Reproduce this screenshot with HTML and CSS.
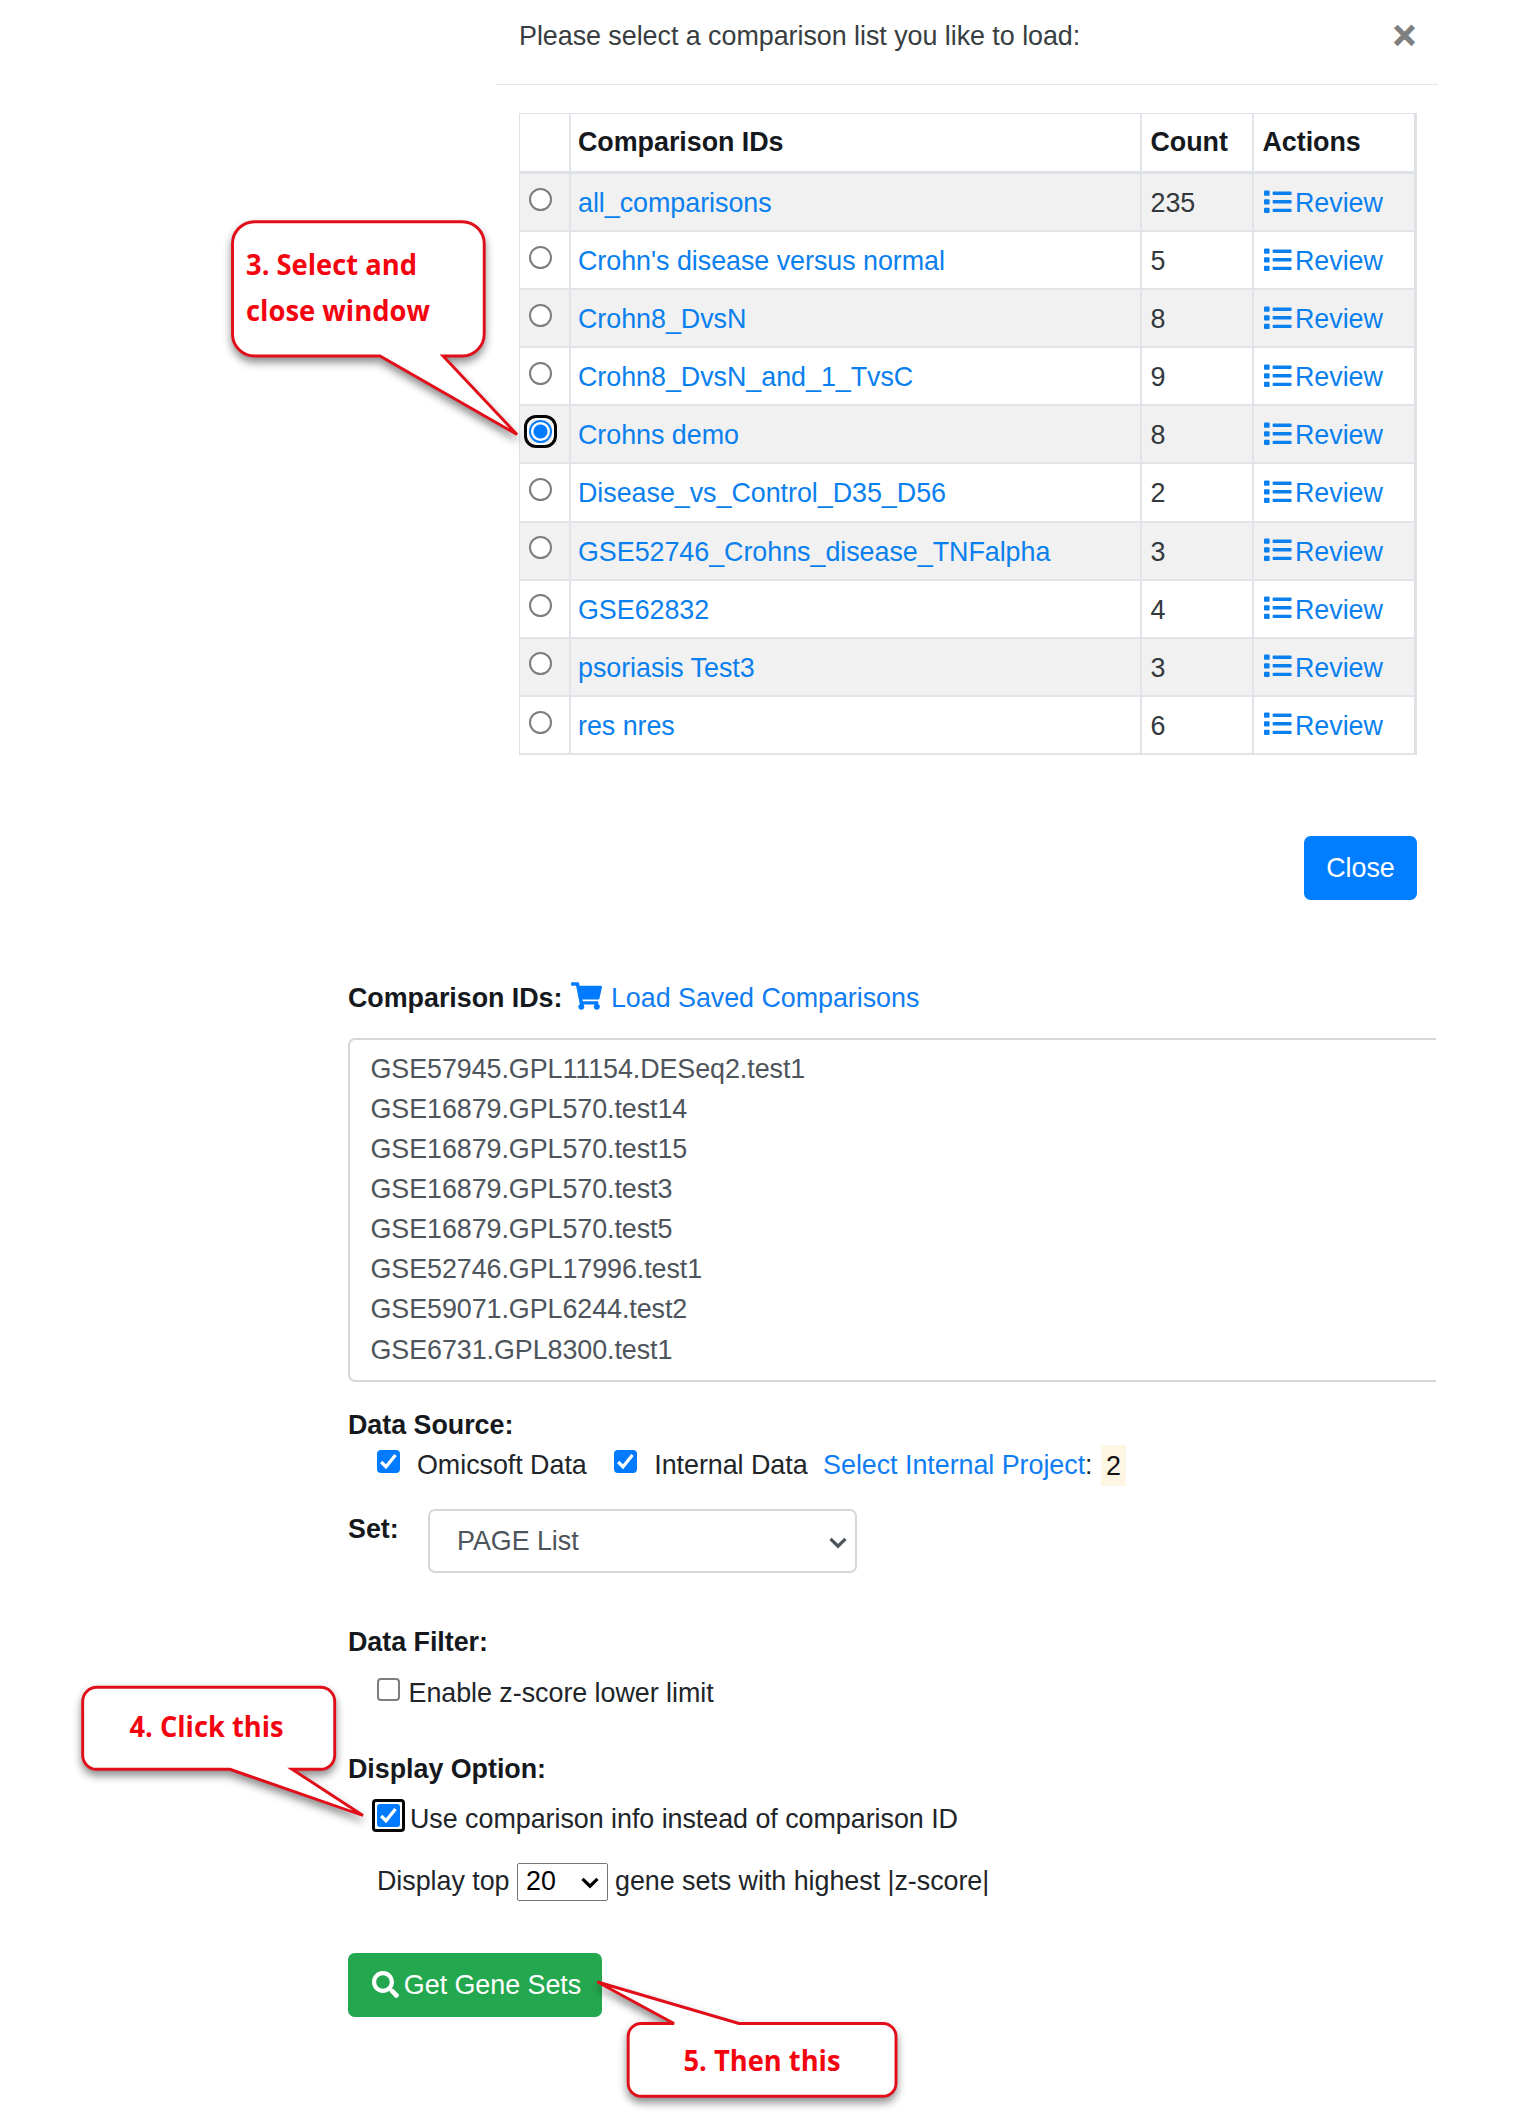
FILE: index.html
```html
<!DOCTYPE html>
<html lang="en">
<head>
<meta charset="utf-8">
<title>Load Saved Comparisons</title>
<link rel="stylesheet" href="styles.css">
</head>
<body>
<svg class="symbols" width="0" height="0" aria-hidden="true">
  <symbol id="list" viewBox="0 0 28 24">
    <rect x="0" y="0.6" width="5.6" height="5.2" rx="1"/><rect x="0" y="9.2" width="5.6" height="5.2" rx="1"/><rect x="0" y="17.8" width="5.6" height="5.2" rx="1"/>
    <rect x="8.6" y="1.5" width="19" height="3.4" rx="1"/><rect x="8.6" y="10.1" width="19" height="3.4" rx="1"/><rect x="8.6" y="18.7" width="19" height="3.4" rx="1"/>
  </symbol>
  <symbol id="cart" viewBox="0 0 576 512">
    <path d="M528.12 301.319l47.273-208C578.806 78.301 567.391 64 551.99 64H159.208l-9.166-44.81C147.758 8.021 137.93 0 126.529 0H24C10.745 0 0 10.745 0 24v16c0 13.255 10.745 24 24 24h69.883l70.248 343.435C147.325 417.1 136 435.222 136 456c0 30.928 25.072 56 56 56s56-25.072 56-56c0-15.674-6.447-29.835-16.824-40h209.647C430.447 426.165 424 440.326 424 456c0 30.928 25.072 56 56 56s56-25.072 56-56c0-22.172-12.888-41.332-31.579-50.405l5.517-24.276c3.413-15.018-8.002-29.319-23.403-29.319H218.117l-6.545-32h293.145c11.206 0 20.92-7.754 23.403-18.681z"/>
  </symbol>
  <symbol id="search" viewBox="0 0 512 512">
    <path d="M505 442.7L405.3 343c-4.500-4.500-10.600-7-17-7H372c27.600-35.300 44-79.700 44-128C416 93.100 322.900 0 208 0S0 93.100 0 208s93.100 208 208 208c48.300 0 92.700-16.400 128-44v16.300c0 6.400 2.500 12.500 7 17l99.700 99.700c9.400 9.400 24.600 9.400 33.900 0l28.300-28.300c9.400-9.400 9.400-24.600.1-34zM208 336c-70.700 0-128-57.200-128-128 0-70.700 57.200-128 128-128 70.700 0 128 57.200 128 128 0 70.700-57.200 128-128 128z"/>
  </symbol>
  <symbol id="check" viewBox="0 0 23 23">
    <path d="M4.200 12 L9 16.700 L18.500 5" fill="none" stroke="#fff" stroke-width="3.300"/>
  </symbol>
  <symbol id="chevron" viewBox="0 0 18 12">
    <path d="M1.500 1.800 L9 9.200 L16.500 1.800" fill="none" stroke="currentColor" stroke-width="3.200"/>
  </symbol>
</svg>

<section class="modal">
  <header class="modal-header">
    <span>Please select a comparison list you like to load:</span>
    <span class="dismiss">×</span>
  </header>
  <div class="grid">
    <div class="row head"><div class="cell"></div><div class="cell">Comparison IDs</div><div class="cell">Count</div><div class="cell">Actions</div></div>
    <div class="row"><div class="cell"><i class="radio"></i></div><div class="cell"><a>all_comparisons</a></div><div class="cell">235</div><div class="cell"><a class="review"><svg><use href="#list"/></svg>Review</a></div></div>
    <div class="row"><div class="cell"><i class="radio"></i></div><div class="cell"><a>Crohn's disease versus normal</a></div><div class="cell">5</div><div class="cell"><a class="review"><svg><use href="#list"/></svg>Review</a></div></div>
    <div class="row"><div class="cell"><i class="radio"></i></div><div class="cell"><a>Crohn8_DvsN</a></div><div class="cell">8</div><div class="cell"><a class="review"><svg><use href="#list"/></svg>Review</a></div></div>
    <div class="row"><div class="cell"><i class="radio"></i></div><div class="cell"><a>Crohn8_DvsN_and_1_TvsC</a></div><div class="cell">9</div><div class="cell"><a class="review"><svg><use href="#list"/></svg>Review</a></div></div>
    <div class="row"><div class="cell"><i class="radio selected"></i></div><div class="cell"><a>Crohns demo</a></div><div class="cell">8</div><div class="cell"><a class="review"><svg><use href="#list"/></svg>Review</a></div></div>
    <div class="row"><div class="cell"><i class="radio"></i></div><div class="cell"><a>Disease_vs_Control_D35_D56</a></div><div class="cell">2</div><div class="cell"><a class="review"><svg><use href="#list"/></svg>Review</a></div></div>
    <div class="row"><div class="cell"><i class="radio"></i></div><div class="cell"><a>GSE52746_Crohns_disease_TNFalpha</a></div><div class="cell">3</div><div class="cell"><a class="review"><svg><use href="#list"/></svg>Review</a></div></div>
    <div class="row"><div class="cell"><i class="radio"></i></div><div class="cell"><a>GSE62832</a></div><div class="cell">4</div><div class="cell"><a class="review"><svg><use href="#list"/></svg>Review</a></div></div>
    <div class="row"><div class="cell"><i class="radio"></i></div><div class="cell"><a>psoriasis Test3</a></div><div class="cell">3</div><div class="cell"><a class="review"><svg><use href="#list"/></svg>Review</a></div></div>
    <div class="row"><div class="cell"><i class="radio"></i></div><div class="cell"><a>res nres</a></div><div class="cell">6</div><div class="cell"><a class="review"><svg><use href="#list"/></svg>Review</a></div></div>
  </div>
  <footer class="modal-footer"><button class="btn primary">Close</button></footer>
</section>

<section class="form">
  <div class="line ids-label"><b>Comparison IDs:</b><svg class="cart"><use href="#cart"/></svg><a>Load Saved Comparisons</a></div>
  <div class="ids">
    <div>GSE57945.GPL11154.DESeq2.test1</div>
    <div>GSE16879.GPL570.test14</div>
    <div>GSE16879.GPL570.test15</div>
    <div>GSE16879.GPL570.test3</div>
    <div>GSE16879.GPL570.test5</div>
    <div>GSE52746.GPL17996.test1</div>
    <div>GSE59071.GPL6244.test2</div>
    <div>GSE6731.GPL8300.test1</div>
  </div>
  <div class="line source-title"><b>Data Source:</b></div>
  <div class="line indent">
    <svg class="check on"><use href="#check"/></svg><span class="omicsoft">Omicsoft Data</span>
    <svg class="check on"><use href="#check"/></svg><span class="internal">Internal Data</span>
    <span><a>Select Internal Project</a>:</span><span class="mark">2</span>
  </div>
  <div class="set">
    <b>Set:</b>
    <div class="select"><span>PAGE List</span><svg class="chevron"><use href="#chevron"/></svg></div>
  </div>
  <div class="line filter-title"><b>Data Filter:</b></div>
  <div class="line indent zscore"><i class="check"></i><span class="option">Enable z-score lower limit</span></div>
  <div class="line display-title"><b>Display Option:</b></div>
  <div class="line indent info"><span class="focus"><svg class="check on"><use href="#check"/></svg></span><span class="option">Use comparison info instead of comparison ID</span></div>
  <div class="line indent top"><span>Display top</span><div class="mini-select"><span>20</span><svg class="chevron"><use href="#chevron"/></svg></div><span>gene sets with highest |z-score|</span></div>
  <button class="btn success"><svg class="search"><use href="#search"/></svg><span>Get Gene Sets</span></button>
</section>

<svg class="callout select-callout" viewBox="222 212 310 240">
  <path d="M254.500 221.700 H462.200 A22 22 0 0 1 484.200 243.700 V334 A22 22 0 0 1 462.200 356 H443 L517 434.500 L380 356 H254.500 A22 22 0 0 1 232.500 334 V243.700 A22 22 0 0 1 254.500 221.700 Z"/>
  <text x="246" y="275" textLength="171" lengthAdjust="spacingAndGlyphs">3. Select and</text>
  <text x="246" y="320.500" textLength="184" lengthAdjust="spacingAndGlyphs">close window</text>
</svg>
<svg class="callout click-callout" viewBox="72 1677 310 160">
  <path d="M96.700 1687.300 H320.700 A14 14 0 0 1 334.700 1701.300 V1755.300 A14 14 0 0 1 320.700 1769.300 H292 L363 1815.500 L230 1769.300 H96.700 A14 14 0 0 1 82.700 1755.300 V1701.300 A14 14 0 0 1 96.700 1687.300 Z"/>
  <text x="129.500" y="1737" textLength="154" lengthAdjust="spacingAndGlyphs">4. Click this</text>
</svg>
<svg class="callout then-callout" viewBox="586 1972 330 142">
  <path d="M641.200 2023.500 H674 L597.500 1982 L739 2023.500 H883 A13 13 0 0 1 896 2036.500 V2083.300 A13 13 0 0 1 883 2096.300 H641.200 A13 13 0 0 1 628.200 2083.300 V2036.500 A13 13 0 0 1 641.200 2023.500 Z"/>
  <text x="683.500" y="2070.500" textLength="157" lengthAdjust="spacingAndGlyphs">5. Then this</text>
</svg>
</body>
</html>
```
FILE: styles.css
```css
* { box-sizing: border-box; }
body {
  margin: 0;
  position: relative;
  height: 2114px;
  overflow: hidden;
  background: #fff;
  color: #212529;
  font: 26.88px/40.32px "Liberation Sans", Arial, sans-serif;
  letter-spacing: -.04px;
}
a { color: #0a80ee; }
b { color: #15191d; }
svg { flex: none; }
.symbols { position: absolute; }

.modal { width: 942px; margin-left: 496px; }
.modal-header {
  display: flex;
  justify-content: space-between;
  height: 85px;
  padding: 16px 22px 0 23px;
  border-bottom: 1px solid #e3e6e9;
  color: #383d41;
}
.dismiss { font-size: 40px; font-weight: bold; color: #7f7f7f; line-height: 38px; -webkit-text-stroke: .8px #7f7f7f; }

.grid {
  width: 898px;
  margin: 28px 0 0 23px;
  border: 1px solid #dee2e6;
  border-width: 1px 3px 0 1px;
}
.row {
  display: grid;
  grid-template-columns: 51px 571px 112px 1fr;
  height: 58.100px;
  border-bottom: 2px solid #e1e4e8;
  color: #33383c;
}
.row:nth-child(even) { background: #f1f1f1; }
.row.head { height: 60px; border-bottom: 3px solid #dee2e6; font-weight: bold; color: #15191d; }
.cell { padding: 9px 0 0 8px; border-right: 2px solid #e1e4e8; white-space: nowrap; }
.head .cell { padding-top: 8px; }
.cell:nth-child(2) { padding-left: 7px; }
.cell:nth-child(3) { padding-left: 8.500px; }
.cell:first-child { padding: 13.700px 0 0 9px; }
.cell:last-child { border-right: 0; padding-left: 8.500px; }
.review { display: flex; gap: 3.500px; }
.review svg { width: 28px; height: 24px; margin: 6.500px 0 0 1px; fill: #0a80ee; }

.radio {
  display: block;
  width: 23px;
  height: 23px;
  border: 2px solid #7d7d7d;
  border-radius: 50%;
  background: #fff;
}
.radio.selected {
  position: relative;
  border-color: #0a7cf5;
  background: radial-gradient(circle, #007bff 6.500px, #fff 7.500px);
}
.radio.selected::after {
  content: "";
  position: absolute;
  inset: -7px;
  border: 3px solid #050505;
  border-radius: 12px;
  box-shadow: inset 0 0 0 1.500px #fff;
}

.modal-footer { display: flex; justify-content: flex-end; padding: 81.500px 21px 0 0; }
.btn {
  display: flex;
  align-items: center;
  justify-content: center;
  height: 64px;
  padding: 0;
  border: 0;
  border-radius: 6.700px;
  color: #fff;
  font: inherit;
  letter-spacing: inherit;
}
.primary { width: 113px; background: #007eff; }
.success { width: 254px; margin-top: 51.500px; padding-left: 3px; background: #24a84f; gap: 5px; }
.search { width: 27px; height: 27px; fill: #fff; }

.form { width: 1088px; margin: 77.300px 0 0 348px; }
.form a { color: #107df3; }
.line { display: flex; height: 40.320px; white-space: nowrap; }
.cart { width: 31px; height: 28px; margin: 4.500px 8.500px 0 9px; fill: #007bff; }
.ids {
  height: 344px;
  margin-top: 20px;
  padding: 8.500px 0 0 20.500px;
  border: solid #d3d8dd;
  border-width: 2px 0 2px 2px;
  border-radius: 7px 0 0 7px;
  color: #4d545b;
  line-height: 40.160px;
  letter-spacing: -.07px;
}
.source-title { margin-top: 22.500px; }
.indent { padding-left: 29px; }
.check {
  display: block;
  flex: none;
  width: 23px;
  height: 23px;
  margin-top: 5px;
  border: 2px solid #7d7d7d;
  border-radius: 4px;
}
.check.on { border: 0; background: #007bff; }
.focus { height: 33px; margin: 0 -5px; padding: 2px; border: 3px solid #050505; border-radius: 4px; }
.focus .check { margin: 0; border-radius: 3px; }
.omicsoft { margin: 0 27.500px 0 17px; }
.internal { margin: 0 15.500px 0 17px; }
.mark { height: 41px; margin-left: 8px; padding: 1px 5.400px 0; background: #fcf6e3; color: #111; }

.set { display: flex; margin-top: 23.700px; }
.set b { width: 80px; }
.select {
  display: flex;
  justify-content: space-between;
  width: 428.500px;
  height: 64px;
  padding: 10px 7.500px 0 27px;
  border: 2px solid #d3d8dd;
  border-radius: 7px;
  color: #4d545b;
}
.chevron { width: 18px; height: 12px; }
.select .chevron { margin-top: 16px; }
.filter-title { margin-top: 49.300px; }
.zscore { margin-top: 10.500px; }
.option { margin-left: 8.500px; }
.focus + .option { margin-left: 10px; }
.display-title { margin-top: 36px; }
.info { margin-top: 9.200px; }
.top { margin-top: 22px; }
.mini-select {
  display: flex;
  justify-content: space-between;
  width: 91px;
  height: 38px;
  margin: 2px 7.500px 0 7px;
  padding: 0 7.500px 0 8.500px;
  border: 1.500px solid #767676;
  border-radius: 2px;
  color: #000;
  line-height: 35px;
}
.mini-select .chevron { margin-top: 13px; }

.callout { position: absolute; overflow: visible; }
.callout path {
  fill: #fff;
  stroke: #e10e1a;
  stroke-width: 2.900;
  filter: drop-shadow(0 5px 4px rgba(0, 0, 0, .45));
}
.callout text { fill: #f3040f; font: 700 28.5px "Open Sans", sans-serif; letter-spacing: 0; }
.select-callout { left: 222px; top: 212px; width: 310px; height: 240px; }
.click-callout { left: 72px; top: 1677px; width: 310px; height: 160px; }
.then-callout { left: 586px; top: 1972px; width: 330px; height: 142px; }
```
